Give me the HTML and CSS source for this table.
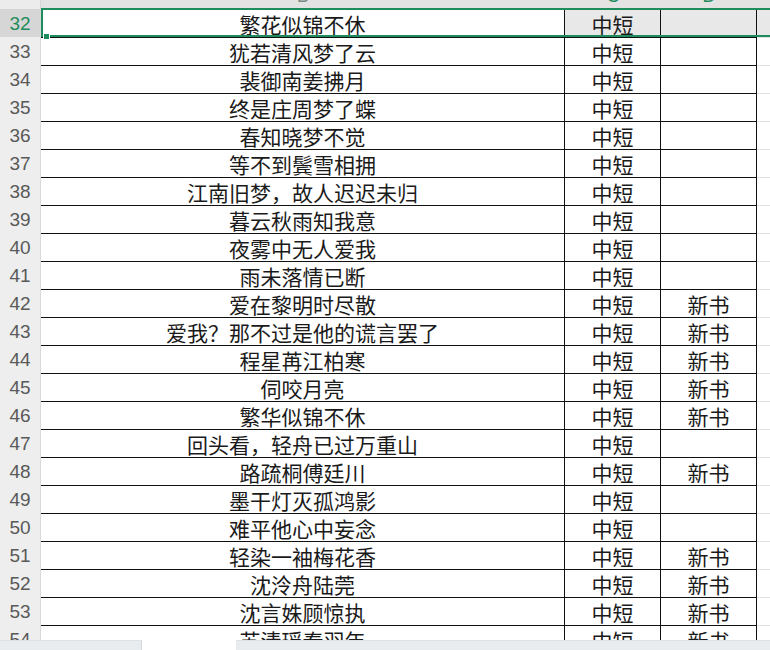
FILE: index.html
```html
<!DOCTYPE html>
<html lang="zh">
<head>
<meta charset="utf-8">
<title>Sheet</title>
<link rel="stylesheet" href="styles.css">
</head>
<body>
<div class="sheet">
  <div class="colhead">
    <div class="ch corner"></div>
    <div class="ch"><span class="cl">B</span></div>
    <div class="ch"><span class="cl sel">C</span></div>
    <div class="ch"><span class="cl sel">D</span></div>
    <div class="ch"></div>
  </div>
  <div class="row selrow"><div class="rh">32</div><div class="c">繁花似锦不休</div><div class="c">中短</div><div class="c"></div><div class="c e"></div></div>
  <div class="row"><div class="rh">33</div><div class="c">犹若清风梦了云</div><div class="c">中短</div><div class="c"></div><div class="c e"></div></div>
  <div class="row"><div class="rh">34</div><div class="c">裴御南姜拂月</div><div class="c">中短</div><div class="c"></div><div class="c e"></div></div>
  <div class="row"><div class="rh">35</div><div class="c">终是庄周梦了蝶</div><div class="c">中短</div><div class="c"></div><div class="c e"></div></div>
  <div class="row"><div class="rh">36</div><div class="c">春知晓梦不觉</div><div class="c">中短</div><div class="c"></div><div class="c e"></div></div>
  <div class="row"><div class="rh">37</div><div class="c">等不到鬓雪相拥</div><div class="c">中短</div><div class="c"></div><div class="c e"></div></div>
  <div class="row"><div class="rh">38</div><div class="c">江南旧梦，故人迟迟未归</div><div class="c">中短</div><div class="c"></div><div class="c e"></div></div>
  <div class="row"><div class="rh">39</div><div class="c">暮云秋雨知我意</div><div class="c">中短</div><div class="c"></div><div class="c e"></div></div>
  <div class="row"><div class="rh">40</div><div class="c">夜雾中无人爱我</div><div class="c">中短</div><div class="c"></div><div class="c e"></div></div>
  <div class="row"><div class="rh">41</div><div class="c">雨未落情已断</div><div class="c">中短</div><div class="c"></div><div class="c e"></div></div>
  <div class="row"><div class="rh">42</div><div class="c">爱在黎明时尽散</div><div class="c">中短</div><div class="c">新书</div><div class="c e"></div></div>
  <div class="row"><div class="rh">43</div><div class="c">爱我？那不过是他的谎言罢了</div><div class="c">中短</div><div class="c">新书</div><div class="c e"></div></div>
  <div class="row"><div class="rh">44</div><div class="c">程星苒江柏寒</div><div class="c">中短</div><div class="c">新书</div><div class="c e"></div></div>
  <div class="row"><div class="rh">45</div><div class="c">伺咬月亮</div><div class="c">中短</div><div class="c">新书</div><div class="c e"></div></div>
  <div class="row"><div class="rh">46</div><div class="c">繁华似锦不休</div><div class="c">中短</div><div class="c">新书</div><div class="c e"></div></div>
  <div class="row"><div class="rh">47</div><div class="c">回头看，轻舟已过万重山</div><div class="c">中短</div><div class="c"></div><div class="c e"></div></div>
  <div class="row"><div class="rh">48</div><div class="c">路疏桐傅廷川</div><div class="c">中短</div><div class="c">新书</div><div class="c e"></div></div>
  <div class="row"><div class="rh">49</div><div class="c">墨干灯灭孤鸿影</div><div class="c">中短</div><div class="c"></div><div class="c e"></div></div>
  <div class="row"><div class="rh">50</div><div class="c">难平他心中妄念</div><div class="c">中短</div><div class="c"></div><div class="c e"></div></div>
  <div class="row"><div class="rh">51</div><div class="c">轻染一袖梅花香</div><div class="c">中短</div><div class="c">新书</div><div class="c e"></div></div>
  <div class="row"><div class="rh">52</div><div class="c">沈泠舟陆莞</div><div class="c">中短</div><div class="c">新书</div><div class="c e"></div></div>
  <div class="row"><div class="rh">53</div><div class="c">沈言姝顾惊执</div><div class="c">中短</div><div class="c">新书</div><div class="c e"></div></div>
  <div class="row"><div class="rh">54</div><div class="c">苏清瑶秦羽年</div><div class="c">中短</div><div class="c">新书</div><div class="c e"></div></div>

  <div class="selection">
    <div class="handle"></div>
  </div>
  <div class="hbar left"></div>
  <div class="hbar right"></div>
</div>
</body>
</html>
```

FILE: styles.css
```css
html, body {
  margin: 0;
  padding: 0;
  background: #ffffff;
  overflow: hidden;
}

.sheet {
  position: relative;
  width: 770px;
  height: 650px;
  overflow: hidden;
  font-family: "Noto Sans CJK SC", "Noto Sans", sans-serif;
  color: #1a1a1a;
}

.colhead,
.row {
  display: grid;
  grid-template-columns: 41px 524px 96px 96px 13px;
}

.colhead {
  height: 9px;
  overflow: hidden;
  background: #e3e3e3;
}

.ch {
  display: flex;
  justify-content: center;
  align-items: flex-start;
  overflow: hidden;
}

.ch.corner {
  background: #ececec;
  border-right: 1px solid #d6d6d6;
}

.cl {
  font-family: "Liberation Sans", Arial, sans-serif;
  font-size: 18px;
  line-height: 18px;
  height: 18px;
  margin-top: -13px;
  color: #7a8a82;
}

.cl.sel {
  color: #1e8c5c;
}

.row {
  height: 28px;
}

.rh {
  display: flex;
  align-items: center;
  justify-content: center;
  background: #eeeeee;
  border-right: 1px solid #d9d9d9;
  font-family: "Liberation Sans", Arial, sans-serif;
  font-size: 19px;
  color: #595959;
  padding-top: 1px;
}

.c {
  display: flex;
  align-items: center;
  justify-content: center;
  border-top: 1px solid #111111;
  border-right: 1px solid #111111;
  font-size: 21px;
  line-height: 26px;
  white-space: nowrap;
  overflow: hidden;
}

.c.e {
  border-right: none;
  border-top-color: #e2e2e2;
}

.selrow .rh {
  background: #d6d6d6;
  color: #1e8c5c;
}

.selrow .c + .c {
  background: #e8e8e8;
}

/* selection outline over the active row */
.selection {
  position: absolute;
  z-index: 2;
  left: 41px;
  top: 8px;
  width: 729px;
  height: 29px;
  box-sizing: border-box;
  border-top: 2px solid #1e8c5c;
  border-bottom: 2px solid #1e8c5c;
  border-left: 2px solid #1e8c5c;
}

.handle {
  position: absolute;
  left: 0px;
  bottom: -5px;
  width: 5px;
  height: 5px;
  background: #1e8c5c;
  border: 1px solid #ffffff;
}

/* horizontal scrollbar strip at the bottom */
.hbar {
  position: absolute;
  z-index: 2;
  bottom: 0;
  height: 9px;
  background: #e9ecef;
  border-top: 1px solid #dde1e5;
}

.hbar.left {
  left: 0;
  width: 141px;
  border-right: 1px solid #d5d9dd;
}

.hbar.right {
  left: 236px;
  right: 0;
}
```
